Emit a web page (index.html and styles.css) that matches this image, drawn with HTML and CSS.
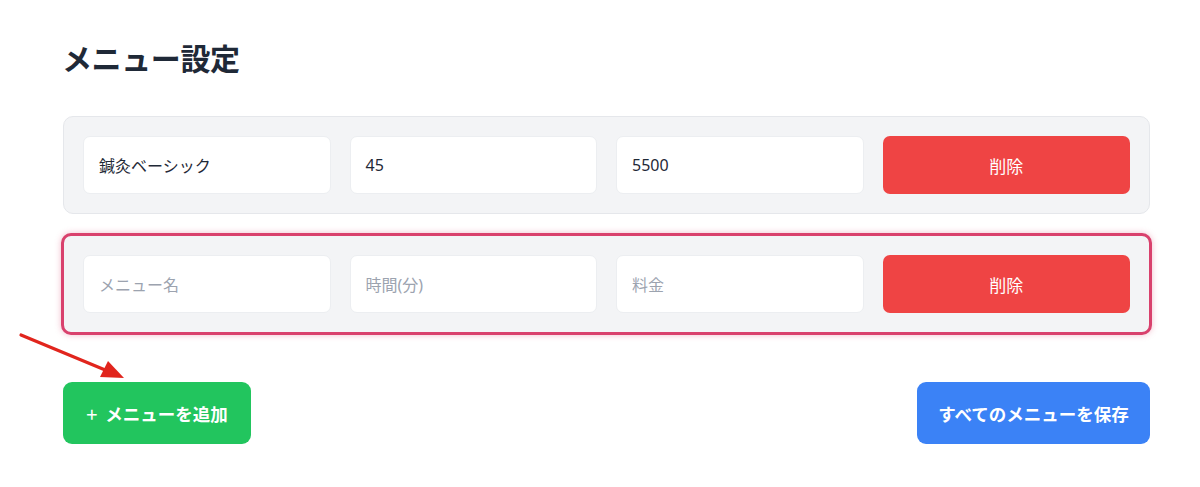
FILE: index.html
```html
<!DOCTYPE html>
<html lang="ja">
<head>
<meta charset="utf-8">
<link rel="stylesheet" href="styles.css">
</head>
<body>
<div class="page">
  <h1 class="title">メニュー設定</h1>
  <div class="card">
    <div class="field">鍼灸ベーシック</div>
    <div class="field">45</div>
    <div class="field">5500</div>
    <button class="btn-delete">削除</button>
  </div>
  <div class="card card-highlight">
    <div class="field placeholder">メニュー名</div>
    <div class="field placeholder">時間(分)</div>
    <div class="field placeholder">料金</div>
    <button class="btn-delete">削除</button>
  </div>
  <div class="actions">
    <button class="btn btn-add"><span class="plus">+</span>メニューを追加</button>
    <button class="btn btn-save">すべてのメニューを保存</button>
  </div>
</div>
<svg class="arrow" width="130" height="70" viewBox="0 0 130 70">
  <line x1="6" y1="5" x2="95" y2="42" stroke="#e1251d" stroke-width="3.2" stroke-linecap="round"/>
  <polygon points="109,48 85,47 93,31" fill="#e1251d"/>
</svg>
</body>
</html>
```

FILE: styles.css
```css
* { box-sizing: border-box; }
html, body { margin: 0; padding: 0; background: #ffffff; }
body {
  font-family: "Noto Sans", "Noto Sans CJK JP", sans-serif;
  color: #1f2937;
  position: relative;
  height: 487px;
  overflow: hidden;
}
.page {
  width: 1087px;
  margin-left: 63px;
  padding-top: 33px;
}
.title {
  font-family: "Noto Sans CJK JP", sans-serif;
  font-size: 30px;
  font-weight: 700;
  line-height: 48px;
  margin: 0 0 35px -1px;
  letter-spacing: -0.4px;
  color: #1f2937;
}
.card {
  display: grid;
  grid-template-columns: repeat(4, 1fr);
  gap: 19px;
  padding: 19px 19px;
  background: #f3f4f6;
  border: 1px solid #e5e7eb;
  border-radius: 10px;
  margin-bottom: 21px;
}
.card-highlight {
  outline: 3px solid #d9416d;
  outline-offset: -1px;
  box-shadow: 0 0 6px 2px rgba(217, 65, 109, 0.35);
  border-radius: 8px;
}
.field {
  height: 58px;
  background: #ffffff;
  border: 1px solid #eceef1;
  border-radius: 7px;
  padding: 0 15px;
  display: flex;
  align-items: center;
  font-size: 16px;
  color: #1f2937;
}
.placeholder { color: #9ca3af; }
.btn-delete {
  height: 58px;
  border: none;
  border-radius: 7px;
  background: #ef4444;
  color: #ffffff;
  font-family: "Noto Sans CJK JP", sans-serif;
  font-size: 17px;
}
.actions {
  display: flex;
  justify-content: space-between;
  margin-top: 49px;
}
.btn {
  height: 62px;
  border: none;
  border-radius: 9px;
  color: #ffffff;
  font-family: "Noto Sans CJK JP", sans-serif;
  font-size: 17.5px;
  font-weight: 700;
  padding: 0;
  white-space: nowrap;
  display: flex;
  align-items: center;
  justify-content: center;
}
.plus {
  font-weight: 400;
  font-size: 20px;
  margin-right: 8px;
}
.btn-add { background: #22c55e; width: 188px; }
.btn-save { background: #3b82f6; width: 233px; }
.arrow {
  position: absolute;
  left: 15px;
  top: 330px;
}
```
